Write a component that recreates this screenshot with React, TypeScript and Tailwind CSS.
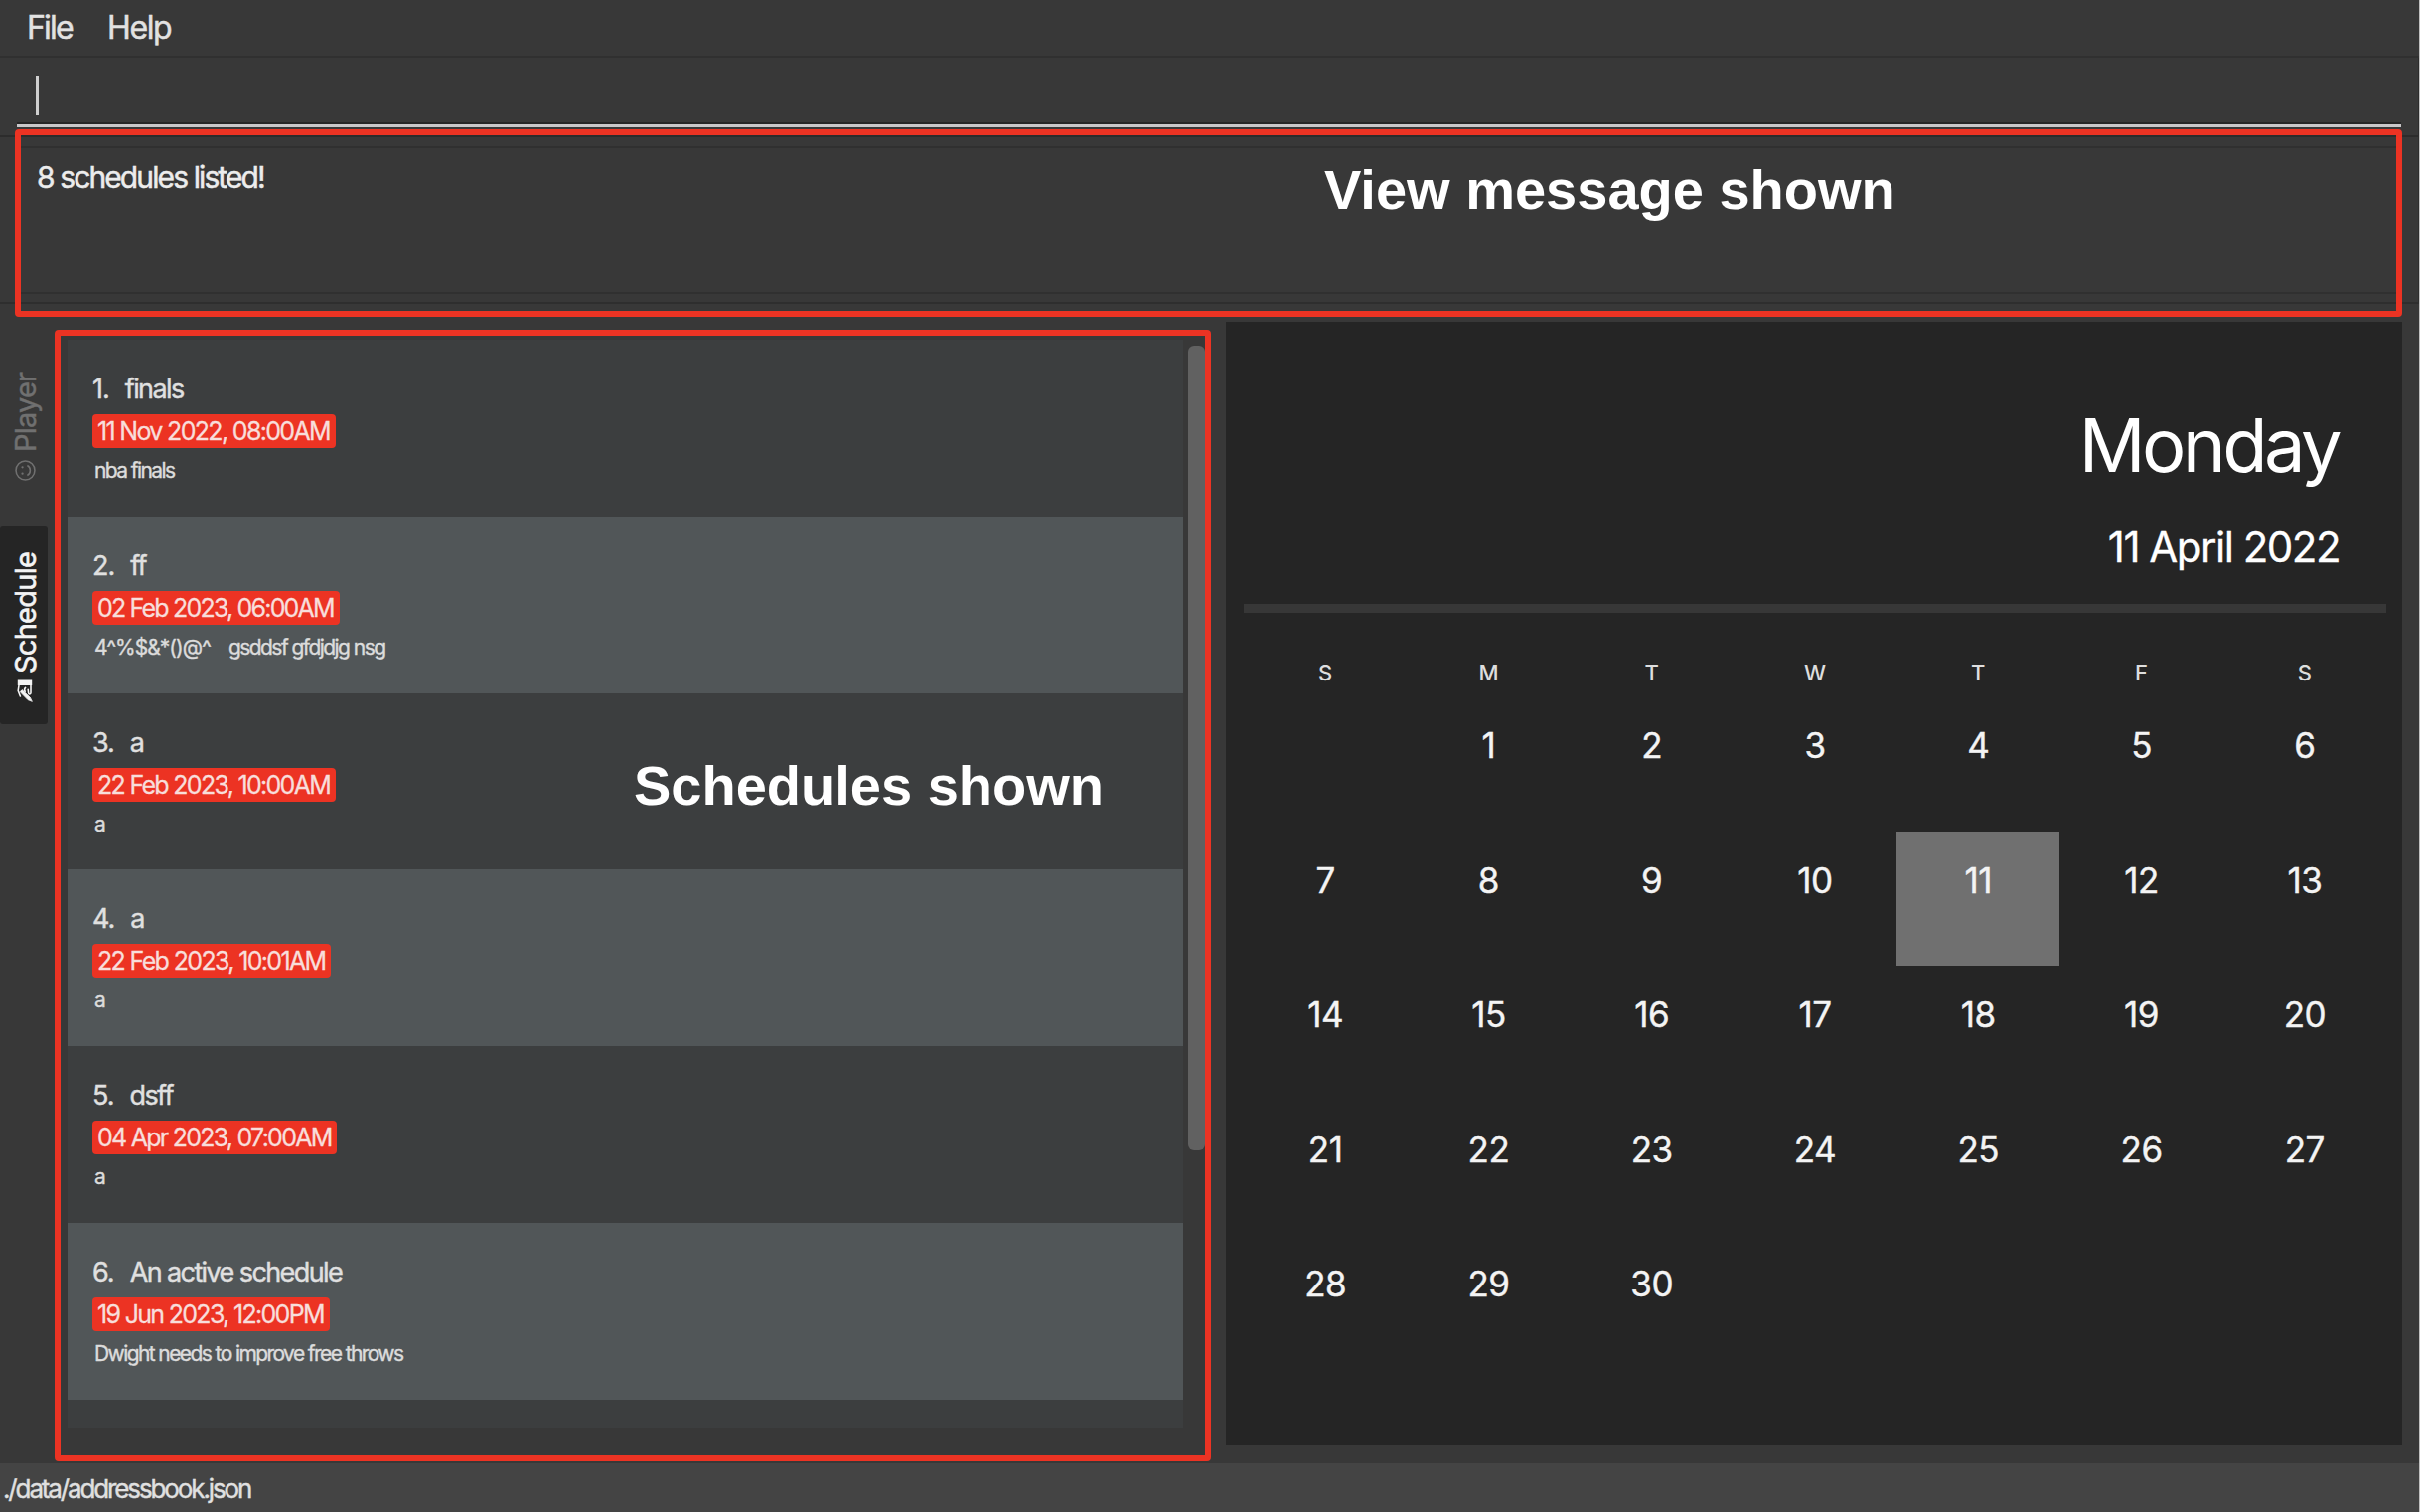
import React from "react";

type Schedule = { title: string; date: string; dateClass: string; note: string; noteExtra?: string };

const schedules: Schedule[] = [
  { title: "finals", date: "11 Nov 2022, 08:00AM", dateClass: "w-[245px] tracking-[-1.67px]", note: "nba finals" },
  { title: "ff", date: "02 Feb 2023, 06:00AM", dateClass: "w-[249px] tracking-[-1.81px]", note: "4^%$&*()@^", noteExtra: "gsddsf gfdjdjg nsg" },
  { title: "a", date: "22 Feb 2023, 10:00AM", dateClass: "w-[245px] tracking-[-1.7px]", note: "a" },
  { title: "a", date: "22 Feb 2023, 10:01AM", dateClass: "w-[240px] tracking-[-1.65px]", note: "a" },
  { title: "dsff", date: "04 Apr 2023, 07:00AM", dateClass: "w-[246px] tracking-[-1.75px]", note: "a" },
  { title: "An active schedule", date: "19 Jun 2023, 12:00PM", dateClass: "w-[239px] tracking-[-1.69px]", note: "Dwight needs to improve free throws" },
];

const weekdays = ["S", "M", "T", "W", "T", "F", "S"];
const cells: (number | null)[] = [null, ...Array.from({ length: 30 }, (_, i) => i + 1)];
const today = 11;

function SmileIcon() {
  return (
    <svg viewBox="0 0 20 20" className="h-[21px] w-[21px] rotate-90" fill="none" stroke="currentColor" strokeWidth="1.5">
      <circle cx="10" cy="10" r="9" />
      <path d="M5.2 11.8a5.2 4.6 0 0 0 9.6 0" />
      <circle cx="7" cy="7.2" r="1.1" fill="currentColor" stroke="none" />
      <circle cx="13" cy="7.2" r="1.1" fill="currentColor" stroke="none" />
    </svg>
  );
}

function WritingHandIcon() {
  return (
    <span className="flex h-6 w-4 items-center justify-center">
      <svg viewBox="0 0 24 16" className="h-[16px] w-[24px] shrink-0 rotate-90" fill="none" stroke="currentColor" strokeWidth="1.6" strokeLinejoin="round" strokeLinecap="round">
        <path d="M17 .8h6.4v14.4H17z" fill="currentColor" stroke="none" />
        <path d="M17 2 11.5 1.2 6 3.4" />
        <path d="M17 14H9.4c-1.8 0-1.8-2.2 0-2.4l3.4-.4" />
        <path d="M10.6 8.2c1.4-.8 3.2-.6 4 .4" />
        <path d="M.8 15 2.4 11 10.4 3.2l2 2-7.6 8z" fill="currentColor" strokeWidth="0.8" />
      </svg>
    </span>
  );
}

function ScheduleRow({ item, index }: { item: Schedule; index: number }) {
  return (
    <li className={`h-[177.8px] shrink-0 pt-[34px] pl-[25px] ${index % 2 ? "bg-[#515658]" : "bg-[#3c3e3f]"}`}>
      <div className="flex h-8 gap-4 text-[27px] leading-8 text-[#e0e0e0] [-webkit-text-stroke:0.4px]">
        <span className="tracking-[-1px]">{index + 1}.</span>
        <span className="tracking-[-1.6px]">{item.title}</span>
      </div>
      <div className={`mt-[9px] h-[34px] rounded-[4px] bg-[#ec3323] pl-[5px] text-[25px] leading-[34px] whitespace-nowrap text-[#f8dedb] [-webkit-text-stroke:0.3px] ${item.dateClass}`}>
        {item.date}
      </div>
      <div className="mt-2.5 flex h-[26px] gap-[18px] pl-[2px] text-[21px] leading-[26px] text-[#dcdcdc] [-webkit-text-stroke:0.4px]">
        <span className={item.noteExtra ? "tracking-[-0.98px]" : "tracking-[-1.59px]"}>{item.note}</span>
        {item.noteExtra && <span className="tracking-[-1.55px]">{item.noteExtra}</span>}
      </div>
    </li>
  );
}

function Calendar() {
  return (
    <section className="h-[1131px] w-[1184px] bg-[#252525] pr-4 pl-[18px]">
      <header className="flex h-[284px] flex-col items-end pt-[79px]">
        <div className="mr-[48px] h-[90px] text-[74px] leading-[90px] tracking-[-3.5px] text-white">Monday</div>
        <div className="mt-8 mr-[47px] h-[52px] text-[42px] leading-[52px] tracking-[-1.5px] text-white [-webkit-text-stroke:0.3px]">11 April 2022</div>
      </header>
      <div className="h-[9px] bg-[#373737]" />
      <div className="mt-[43px] grid grid-cols-7 text-center text-[22px] leading-[34px] font-medium text-[#dedede]">
        {weekdays.map((d, i) => (
          <span key={i}>{d}</span>
        ))}
      </div>
      <div className="mt-[7px] grid auto-rows-[135.5px] grid-cols-7 text-center text-[35px] tracking-[-0.5px] text-[#f4f4f4] [-webkit-text-stroke:0.4px]">
        {cells.map((n, i) => (
          <div key={i} className={`pt-[29px] leading-10 ${n === today ? "bg-[#707070]" : ""}`}>
            {n}
          </div>
        ))}
      </div>
    </section>
  );
}

export default function App() {
  return (
    <div className="relative flex h-[1522px] w-[2436px] flex-col overflow-hidden border-r border-[#c0c0c0] bg-[#383838] font-[Inter,sans-serif]">
      <nav className="flex h-[58px] shrink-0 border-b-2 border-[#303030] pl-[27px] text-[32px] leading-[56px] text-[#e2e2e2] [-webkit-text-stroke:0.5px]">
        <span className="w-[81px] tracking-[-1.8px]">File</span>
        <span className="tracking-[-1.4px]">Help</span>
      </nav>

      <div className="h-[80px] shrink-0 border-r border-b-2 border-[#2c2c2c] pr-[17px] pl-[17px]">
        <div className="flex h-[70px] items-start border-b-3 border-[#c9c7c9] pt-[19px] pl-[19px] shadow-[inset_0_-2px_0_#262626]">
          <div className="h-[39px] w-[3px] bg-[#cfcfcf]" />
        </div>
      </div>

      <div className="h-[168px] shrink-0 border-r border-b-2 border-[#2e2e2e] px-[17px] pt-[9px]">
        <div className="h-[149px] border-y-2 border-[#303030] pt-[11px] pl-[20px] text-[30px] leading-[36px] tracking-[-1.89px] text-[#ececec] [-webkit-text-stroke:0.5px]">
          8 schedules listed!
        </div>
      </div>

      <main className="flex h-[1167px] shrink-0">
        <div className="w-[68px] pt-[23px]">
          <div className="flex h-[200px] w-12 rotate-180 items-center justify-center gap-[8px] pr-[3px] text-[29px] leading-[44px] tracking-[-0.8px] text-[#707070] [-webkit-text-stroke:0.4px] [writing-mode:vertical-rl]">
            <SmileIcon />
            <span>Player</span>
          </div>
          <div className="flex h-[200px] w-12 rotate-180 items-center justify-center gap-[5px] rounded-[3px] bg-[#252525] pr-[3px] pb-[5px] text-[29px] leading-[44px] tracking-[-0.75px] text-[#f4f4f4] [-webkit-text-stroke:0.6px] [writing-mode:vertical-rl]">
            <WritingHandIcon />
            <span>Schedule</span>
          </div>
        </div>
        <div className="flex w-[1166px] gap-[5px] pt-[36px]">
          <ul className="flex h-[1095px] w-[1123px] flex-col overflow-hidden">
            {schedules.map((s, i) => (
              <ScheduleRow key={i} item={s} index={i} />
            ))}
            <li className="h-[29px] bg-[#3c3e3f]" />
          </ul>
          <div className="mt-[6px] h-[810px] w-[17px] rounded-[6px] bg-[#616161]" />
        </div>
        <div className="pt-[18px]">
          <Calendar />
        </div>
      </main>

      <footer className="flex-1 bg-[#444444] pt-px pl-[3px] text-[26px] leading-[50px] tracking-[-2.13px] text-[#e0e0e0] [-webkit-text-stroke:0.4px]">
        ./data/addressbook.json
      </footer>

      <div className="absolute top-[130px] left-[15px] h-[189px] w-[2403px] rounded-[4px] border-6 border-[#ec3323]" />
      <div className="absolute top-[332px] left-[55px] h-[1139px] w-[1164px] rounded-[4px] border-6 border-[#ec3323]" />
      <div className="absolute top-[159px] left-[1333px] font-['Liberation_Sans',sans-serif] text-[56px] leading-[64px] font-bold whitespace-nowrap text-white">
        View message shown
      </div>
      <div className="absolute top-[759px] left-[638px] font-['Liberation_Sans',sans-serif] text-[56px] leading-[64px] font-bold whitespace-nowrap text-white">
        Schedules shown
      </div>
    </div>
  );
}
